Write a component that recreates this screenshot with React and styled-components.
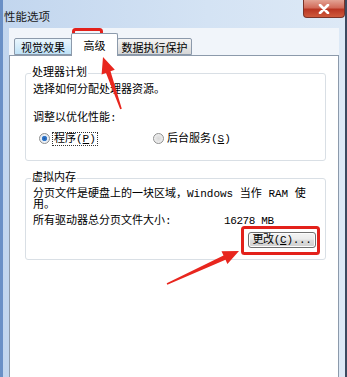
import React from 'react';
import styled, { createGlobalStyle } from 'styled-components';

const GlobalStyle = createGlobalStyle`
  html, body {
    margin: 0;
    padding: 0;
  }
  body {
    width: 347px;
    height: 377px;
    overflow: hidden;
    background: #fff;
    font-family: 'Liberation Mono', 'Noto Sans CJK SC', monospace;
    font-size: 11px;
    color: #000;
  }
`;

const arrowPoints = (x1, y1, x2, y2, shaft = 2.4, head = 7, headLen = 16) => {
  const dx = x2 - x1;
  const dy = y2 - y1;
  const len = Math.sqrt(dx * dx + dy * dy);
  const ux = dx / len;
  const uy = dy / len;
  const nx = -uy;
  const ny = ux;
  const bx = x2 - ux * headLen;
  const by = y2 - uy * headLen;
  const pts = [
    [x1 + nx * 0.8, y1 + ny * 0.8],
    [bx + nx * shaft, by + ny * shaft],
    [bx + nx * head, by + ny * head],
    [x2, y2],
    [bx - nx * head, by - ny * head],
    [bx - nx * shaft, by - ny * shaft],
    [x1 - nx * 0.8, y1 - ny * 0.8]
  ];
  return pts.map(p => p.map(v => v.toFixed(1)).join(',')).join(' ');
};

export default function App() {
  return (
    <>
      <GlobalStyle />
      <Window>
        <TitleBar>
          <Title>性能选项</Title>
          <CloseButton>
            <svg width="12" height="10" viewBox="0 0 12 10">
              <path d="M2 1 L10 9 M10 1 L2 9" stroke="#fff" strokeWidth="2.6" strokeLinecap="round" />
            </svg>
          </CloseButton>
        </TitleBar>
        <Frame>
          <Client>
            <TabStrip>
              <Tab $tone="blue" $width={58}>视觉效果</Tab>
              <Tab $active $width={47}>高级</Tab>
              <Tab $width={75}>数据执行保护</Tab>
            </TabStrip>
            <Panel>
              <Group $bottom={15}>
                <Legend>处理器计划</Legend>
                <Line $top={5}>选择如何分配处理器资源。</Line>
                <Line $top={16}>调整以优化性能:</Line>
                <RadioRow>
                  <Option>
                    <Radio $checked />
                    <FocusLabel>程序(<u>P</u>)</FocusLabel>
                  </Option>
                  <Option>
                    <Radio />
                    <span>后台服务(<u>S</u>)</span>
                  </Option>
                </RadioRow>
              </Group>
              <Group $gap={11} $bottom={11}>
                <Legend>虚拟内存</Legend>
                <Paragraph>
                  分页文件是硬盘上的一块区域，Windows 当作 RAM 使<br />用。
                </Paragraph>
                <SizeRow>
                  <span>所有驱动器总分页文件大小:</span>
                  <SizeValue>16278 MB</SizeValue>
                </SizeRow>
                <ButtonRow>
                  <PushButton>更改(<u>C</u>)...</PushButton>
                </ButtonRow>
              </Group>
            </Panel>
          </Client>
        </Frame>
        <Overlay width="347" height="377" viewBox="0 0 347 377">
          <rect x="73.5" y="29.5" width="28" height="25" rx="2" fill="none" stroke="#e3211b" strokeWidth="3" />
          <rect x="242.5" y="227.5" width="76" height="26" rx="2" fill="none" stroke="#e3211b" strokeWidth="3" />
          <polygon points={arrowPoints(121, 109, 103, 57)} fill="#e8261e" />
          <polygon points={arrowPoints(167, 284, 239, 251)} fill="#e8261e" />
        </Overlay>
      </Window>
    </>
  );
}

const Window = styled.div`
  position: relative;
  width: 347px;
  height: 377px;
  box-sizing: border-box;
  display: flex;
  flex-direction: column;
  overflow: hidden;
  border-left: 3px solid #6a90c6;
  border-right: 2px solid #3b4a60;
  background: linear-gradient(to right, #c2d6ee, #d4e3f4 60%, #dde9f6);
`;

const TitleBar = styled.div`
  height: 28px;
  flex: none;
  display: flex;
  align-items: flex-start;
  padding-left: 1px;
`;

const Title = styled.div`
  margin-top: 9px;
  font-family: 'Noto Sans CJK SC', sans-serif;
  font-size: 11.5px;
  line-height: 14px;
  color: #1a1a1a;
`;

const CloseButton = styled.div`
  margin-left: auto;
  width: 42px;
  height: 18px;
  box-sizing: border-box;
  display: flex;
  align-items: center;
  justify-content: center;
  border: 1px solid #7a3328;
  border-top: none;
  border-radius: 0 0 4px 4px;
  background: linear-gradient(to bottom, #e3a394, #d26b5a 45%, #b93623 55%, #cf5a3c);
`;

const Frame = styled.div`
  flex: 1;
  display: flex;
  padding: 0 6px;
`;

const Client = styled.div`
  flex: 1;
  display: flex;
  flex-direction: column;
  padding-top: 5px;
  background: #f1f5fa;
`;

const TabStrip = styled.div`
  height: 22px;
  display: flex;
  align-items: flex-end;
  padding-left: 5px;
  position: relative;
  z-index: 1;
`;

const Tab = styled.div`
  box-sizing: border-box;
  width: ${p => p.$width}px;
  height: ${p => (p.$active ? '23px' : '17px')};
  margin-bottom: ${p => (p.$active ? '-1px' : '0')};
  padding-top: ${p => (p.$active ? '4px' : '1px')};
  margin-left: ${p => (p.$active ? '-1px' : '0')};
  margin-right: ${p => (p.$active ? '-1px' : '0')};
  border: 1px solid #8c9aab;
  border-bottom: ${p => (p.$active ? 'none' : '1px solid #8c9aab')};
  border-radius: 2px 2px 0 0;
  font-family: 'Noto Sans CJK SC', sans-serif;
  font-size: 11px;
  line-height: 14px;
  text-align: center;
  white-space: nowrap;
  background: ${p =>
    p.$active
      ? '#fff'
      : p.$tone === 'blue'
      ? 'linear-gradient(to bottom, #eaf6fd, #d5ecfa 50%, #bfe2f7)'
      : 'linear-gradient(to bottom, #f4f4f4, #e6e6e6 50%, #d6d6d6)'};
  position: relative;
  z-index: ${p => (p.$active ? 2 : 1)};
`;

const Panel = styled.div`
  flex: 1;
  background: #fff;
  border: 1px solid #8c9aab;
  border-bottom: none;
  padding: 11px 12px 0 15px;
`;

const Group = styled.fieldset`
  margin: ${p => p.$gap || 0}px 0 0;
  padding: 0 7px ${p => p.$bottom}px 7px;
  border: 1px solid #d9dfe5;
  border-radius: 3px;
  min-width: 0;
`;

const Legend = styled.legend`
  margin-left: -2px;
  padding: 0 1px;
  font-size: 11px;
  line-height: 12px;
`;

const Line = styled.div`
  margin-top: ${p => p.$top}px;
  line-height: 12px;
  white-space: nowrap;
`;

const RadioRow = styled.div`
  margin-top: 8px;
  display: flex;
  align-items: center;
  height: 13px;
  padding-left: 6px;
`;

const Option = styled.label`
  width: 114px;
  display: flex;
  align-items: center;
  gap: 3px;
  line-height: 12px;
  white-space: nowrap;
`;

const Radio = styled.span`
  width: 11px;
  height: 11px;
  box-sizing: border-box;
  border-radius: 50%;
  border: 1px solid #8e8f8f;
  background: ${p =>
    p.$checked
      ? 'radial-gradient(circle, #1f5aa8 0, #3a7fd0 2.4px, #e9eef4 3px)'
      : 'radial-gradient(circle, #d8d8d8 0, #e6e6e6 3px, #f4f4f4 5px)'};
  flex: none;
`;

const FocusLabel = styled.span`
  outline: 1px dotted #333;
  outline-offset: 0;
  padding: 0 1px;
`;

const Paragraph = styled.div`
  margin-top: 5px;
  line-height: 11px;
  white-space: nowrap;
`;

const SizeRow = styled.div`
  margin-top: 4px;
  display: flex;
  line-height: 12px;
  white-space: nowrap;
`;

const SizeValue = styled.span`
  flex: none;
  margin-left: auto;
  width: 94px;
  letter-spacing: -0.4px;
`;

const ButtonRow = styled.div`
  display: flex;
  justify-content: flex-end;
  margin-top: 5px;
  padding-right: 2px;
`;

const PushButton = styled.div`
  width: 68px;
  height: 16px;
  box-sizing: border-box;
  border: 1px solid #707070;
  border-radius: 3px;
  background: linear-gradient(to bottom, #f3f3f3, #ebebeb 45%, #dddddd 50%, #cfcfcf);
  box-shadow: inset 0 0 0 1px #fcfcfc;
  display: flex;
  align-items: center;
  justify-content: center;
  line-height: 12px;
  letter-spacing: -0.3px;
  white-space: nowrap;
`;

const Overlay = styled.svg`
  position: absolute;
  left: -3px;
  top: 0;
  pointer-events: none;
`;
